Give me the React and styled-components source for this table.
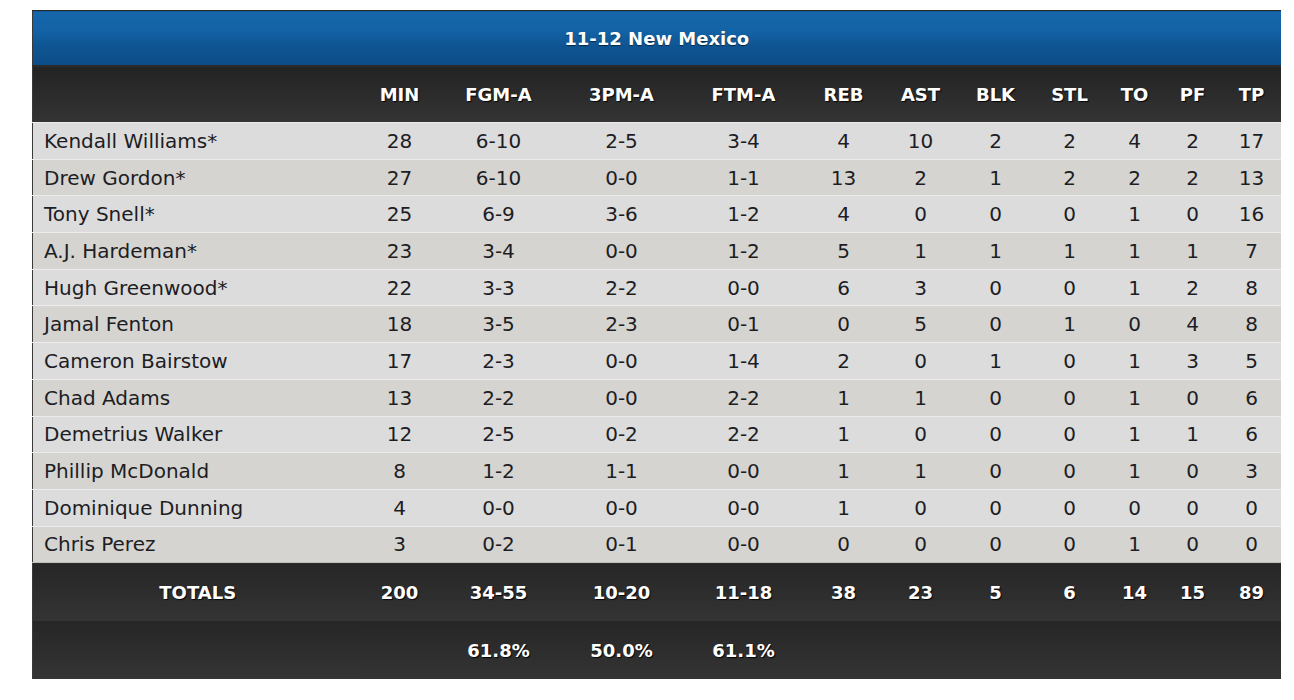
import React from 'react';
import styled, { createGlobalStyle } from 'styled-components';

const GlobalStyle = createGlobalStyle`
  html, body {
    margin: 0;
    padding: 0;
    background: #FFFFFF;
  }
  body {
    font-family: "DejaVu Sans", Verdana, sans-serif;
  }
`;

const Page = styled.div`
  padding: 10px 14px 20px 32px;
`;

const BoxScore = styled.table`
  width: 1248px;
  border-collapse: collapse;
  table-layout: fixed;
  border-top: 1px solid #2b2b2b;
  border-left: 1px solid #3a3a3a;
`;

const TitleCell = styled.th`
  height: 54px;
  padding: 0;
  background: linear-gradient(to bottom, #1566aa 0%, #1363a6 35%, #0f5492 65%, #0c4d87 100%);
  border-bottom: 1px solid #2a2a2a;
  color: #FFFFFF;
  font-size: 18px;
  font-weight: 700;
  text-align: center;
  text-shadow: 0 1px 1px rgba(0, 0, 0, 0.55);
`;

const HeadCell = styled.th`
  height: 56px;
  padding: 0;
  background: linear-gradient(to bottom, #232323, #343434);
  color: #FFFFFF;
  font-size: 18px;
  font-weight: 700;
  text-align: center;
  text-shadow: 1px 1px 1px rgba(0, 0, 0, 0.9);
`;

const Row = styled.tr`
  background: ${props => (props.odd ? '#dcdcdc' : '#d5d4d0')};
  border-bottom: 1px solid #bdbcb8;
`;

const NameCell = styled.td`
  height: 35.7px;
  padding: 0 0 0 11px;
  font-size: 20px;
  color: #1d1d24;
  white-space: nowrap;
  border-top: 1px solid #ececec;
`;

const StatCell = styled.td`
  height: 35.7px;
  padding: 0;
  font-size: 20px;
  color: #1d1d24;
  text-align: center;
  border-top: 1px solid #ececec;
`;

const FootCell = styled.td`
  height: 58px;
  padding: 0;
  background: linear-gradient(to bottom, #262626, #343434);
  color: #FFFFFF;
  font-size: 18px;
  font-weight: 700;
  text-align: center;
  text-shadow: 1px 1px 1px rgba(0, 0, 0, 0.9);
`;

const widths = [330, 74, 124, 122, 122, 78, 76, 74, 74, 56, 60, 58];
const columns = ['MIN', 'FGM-A', '3PM-A', 'FTM-A', 'REB', 'AST', 'BLK', 'STL', 'TO', 'PF', 'TP'];

const players = [
  ['Kendall Williams*', '28', '6-10', '2-5', '3-4', '4', '10', '2', '2', '4', '2', '17'],
  ['Drew Gordon*', '27', '6-10', '0-0', '1-1', '13', '2', '1', '2', '2', '2', '13'],
  ['Tony Snell*', '25', '6-9', '3-6', '1-2', '4', '0', '0', '0', '1', '0', '16'],
  ['A.J. Hardeman*', '23', '3-4', '0-0', '1-2', '5', '1', '1', '1', '1', '1', '7'],
  ['Hugh Greenwood*', '22', '3-3', '2-2', '0-0', '6', '3', '0', '0', '1', '2', '8'],
  ['Jamal Fenton', '18', '3-5', '2-3', '0-1', '0', '5', '0', '1', '0', '4', '8'],
  ['Cameron Bairstow', '17', '2-3', '0-0', '1-4', '2', '0', '1', '0', '1', '3', '5'],
  ['Chad Adams', '13', '2-2', '0-0', '2-2', '1', '1', '0', '0', '1', '0', '6'],
  ['Demetrius Walker', '12', '2-5', '0-2', '2-2', '1', '0', '0', '0', '1', '1', '6'],
  ['Phillip McDonald', '8', '1-2', '1-1', '0-0', '1', '1', '0', '0', '1', '0', '3'],
  ['Dominique Dunning', '4', '0-0', '0-0', '0-0', '1', '0', '0', '0', '0', '0', '0'],
  ['Chris Perez', '3', '0-2', '0-1', '0-0', '0', '0', '0', '0', '1', '0', '0'],
];

const totals = ['TOTALS', '200', '34-55', '10-20', '11-18', '38', '23', '5', '6', '14', '15', '89'];
const percents = ['', '', '61.8%', '50.0%', '61.1%', '', '', '', '', '', '', ''];

export default function App() {
  return (
    <>
      <GlobalStyle />
      <Page>
        <BoxScore>
          <colgroup>
            {widths.map((w, i) => <col key={i} style={{ width: w }} />)}
          </colgroup>
          <thead>
            <tr>
              <TitleCell colSpan={12}>11-12 New Mexico</TitleCell>
            </tr>
            <tr>
              <HeadCell />
              {columns.map(c => <HeadCell key={c}>{c}</HeadCell>)}
            </tr>
          </thead>
          <tbody>
            {players.map((p, i) => (
              <Row key={p[0]} odd={i % 2 === 0}>
                <NameCell>{p[0]}</NameCell>
                {p.slice(1).map((v, j) => <StatCell key={j}>{v}</StatCell>)}
              </Row>
            ))}
          </tbody>
          <tfoot>
            <tr>
              {totals.map((v, i) => <FootCell key={i}>{v}</FootCell>)}
            </tr>
            <tr>
              {percents.map((v, i) => <FootCell key={i}>{v}</FootCell>)}
            </tr>
          </tfoot>
        </BoxScore>
      </Page>
    </>
  );
}
